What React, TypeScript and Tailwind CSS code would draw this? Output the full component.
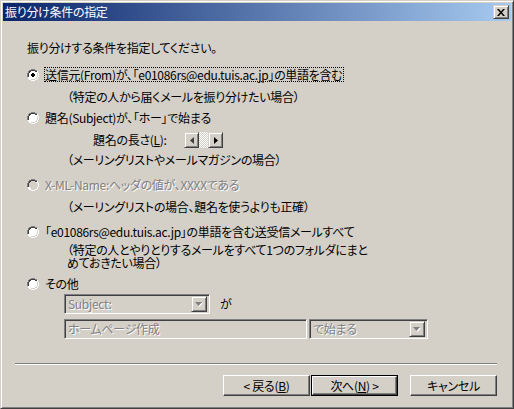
import React from "react";

const sunken =
  "border border-t-[#808080] border-l-[#808080] border-r-white border-b-white shadow-[inset_1px_1px_0_#404040,inset_-1px_-1px_0_#d4d0c8]";
const raised =
  "border border-t-[#d4d0c8] border-l-[#d4d0c8] border-r-[#404040] border-b-[#404040] shadow-[inset_1px_1px_0_#fff,inset_-1px_-1px_0_#808080] bg-[#d4d0c8]";
const btnRaised =
  "border border-t-white border-l-white border-r-[#404040] border-b-[#404040] shadow-[inset_-1px_-1px_0_#808080] bg-[#d4d0c8]";
const disabledText = "text-[#808080] [text-shadow:1px_1px_0_#fff]";

function Radio({ checked = false, disabled = false }: { checked?: boolean; disabled?: boolean }) {
  return (
    <svg width="12" height="12" viewBox="0 0 12 12" className="shrink-0">
      <path d="M4 0h4v1h2v1h1v2h1v4h-1v2h-1v1h-2v1h-4v-1h-2v-1h-1v-2h-1v-4h1v-2h1v-1h2z" fill="#fff" />
      <path d="M4 0h4v1h2v1h-2v-1h-4v1h-2v2h-1v4h-1v-4h1v-2h1v-1h2z" fill="#808080" />
      <path d="M4 1h4v1h2v1h-2v-1h-4v1h-1v1h-1v4h-1v-4h1v-2h1z" fill="#404040" />
      <path d="M10 3h0v1h1v4h-1v2h-2v1h-4v-1h4v-1h1v-1h1v-4z" fill="#d4d0c8" />
      <path d="M4 2h4v1h1v1h1v4h-1v1h-1v1h-4v-1h-1v-1h-1v-4h1v-1h1z" fill={disabled ? "#d4d0c8" : "#fff"} />
      {checked && <path d="M5 4h2v1h1v2h-1v1h-2v-1h-1v-2h1z" fill="#000" />}
    </svg>
  );
}

function DownArrow({ disabled = false }: { disabled?: boolean }) {
  return (
    <svg width="8" height="5" viewBox="0 0 8 5">
      {disabled && <path d="M1 1h7l-3.5 4z" fill="#fff" />}
      <path d="M0 0h7l-3.5 4z" fill={disabled ? "#808080" : "#000"} />
    </svg>
  );
}

function Combo({ text, width }: { text: string; width: string }) {
  return (
    <div className={`${sunken} ${width} h-[20px] bg-[#d4d0c8] flex items-center p-[2px]`}>
      <div className={`flex-1 pl-[1px] leading-[14px] whitespace-nowrap ${disabledText}`}>{text}</div>
      <div className={`${raised} w-[16px] h-[16px] flex items-center justify-center`}>
        <DownArrow disabled />
      </div>
    </div>
  );
}

function RadioRow({
  children,
  checked = false,
  disabled = false,
  focused = false,
  mt,
}: {
  children: React.ReactNode;
  checked?: boolean;
  disabled?: boolean;
  focused?: boolean;
  mt: string;
}) {
  return (
    <div className={`${mt} ml-[24px] h-[15px] flex items-center`}>
      <Radio checked={checked} disabled={disabled} />
      <div
        className={`ml-[5px] h-[15px] leading-[13px] pr-[1px] whitespace-nowrap border ${
          focused ? "border-dotted border-black" : "border-transparent"
        } ${disabled ? disabledText : ""}`}
      >
        {children}
      </div>
    </div>
  );
}

export default function App() {
  return (
    <div className="w-[514px] h-[409px] bg-[#d4d0c8] border border-t-[#d4d0c8] border-l-[#d4d0c8] border-r-[#404040] border-b-[#404040] shadow-[inset_1px_1px_0_#fff,inset_-1px_-1px_0_#808080] p-[2px] flex flex-col font-['Noto_Sans_CJK_JP','Liberation_Sans',sans-serif] [font-feature-settings:'palt'] tracking-[-0.3px] text-[12px] text-black overflow-hidden">
      {/* Title bar */}
      <div className="h-[18px] shrink-0 bg-[linear-gradient(to_right,#0a246a,#a6caf0)] flex items-center justify-between pl-[2px] pr-[2px]">
        <div className="text-white leading-[14px] whitespace-nowrap">振り分け条件の指定</div>
        <div className={`${raised} w-[16px] h-[14px] flex items-center justify-center`}>
          <svg width="8" height="7" viewBox="0 0 8 7">
            <path d="M0 0h2l2 2.5L6 0h2L5 3.5 8 7H6L4 4.5 2 7H0l3-3.5z" fill="#000" />
          </svg>
        </div>
      </div>

      <div className="mt-[1px] flex flex-col">
        <div className="mt-[19px] ml-[24px] h-[14px] leading-[14px] whitespace-nowrap">
          振り分けする条件を指定してください。
        </div>

        <RadioRow mt="mt-[12px]" checked focused>
          送信元(From)が、「e01086rs@edu.tuis.ac.jp」の単語を含む
        </RadioRow>
        <div className="mt-[8px] ml-[64px] h-[14px] leading-[14px] whitespace-nowrap">
          （特定の人から届くメールを振り分けたい場合）
        </div>

        <RadioRow mt="mt-[6px]">題名(Subject)が、「ホー」で始まる</RadioRow>

        <div className="mt-[7px] ml-[90px] h-[16px] flex items-center">
          <div className="w-[91px] leading-[14px] whitespace-nowrap">
            題名の長さ(<span className="underline underline-offset-1">L</span>):
          </div>
          <div className="flex h-[16px]">
            <div className={`${raised} w-[15px] h-[16px] flex items-center justify-center`}>
              <svg width="4" height="7" viewBox="0 0 4 7">
                <path d="M4 0v7L0 3.5z" fill="#404040" />
              </svg>
            </div>
            <div className="w-[9px] h-[16px] bg-[repeating-conic-gradient(#fff_0%_25%,#d4d0c8_0%_50%)] bg-[length:2px_2px]" />
            <div className={`${raised} w-[15px] h-[16px] flex items-center justify-center`}>
              <svg width="4" height="7" viewBox="0 0 4 7">
                <path d="M0 0v7L4 3.5z" fill="#000" />
              </svg>
            </div>
          </div>
        </div>

        <div className="mt-[5px] ml-[64px] h-[14px] leading-[14px] whitespace-nowrap">
          （メーリングリストやメールマガジンの場合）
        </div>

        <RadioRow mt="mt-[10px]" disabled>
          X-ML-Name:ヘッダの値が、XXXXである
        </RadioRow>
        <div className="mt-[8px] ml-[64px] h-[14px] leading-[14px] whitespace-nowrap">
          （メーリングリストの場合、題名を使うよりも正確）
        </div>

        <RadioRow mt="mt-[10px]">
          「e01086rs@edu.tuis.ac.jp」の単語を含む送受信メールすべて
        </RadioRow>
        <div className="mt-[4px] ml-[64px] leading-[13px] whitespace-nowrap">
          <div className="h-[13px]">（特定の人とやりとりするメールをすべて1つのフォルダにまと</div>
          <div className="h-[13px]">めておきたい場合）</div>
        </div>

        <RadioRow mt="mt-[7px]">その他</RadioRow>

        <div className="mt-[3px] ml-[61px] h-[20px] flex items-center">
          <Combo text="Subject:" width="w-[146px]" />
          <div className="ml-[10px] leading-[14px]">が</div>
        </div>

        <div className="mt-[5px] ml-[61px] h-[20px] flex items-center gap-[2px]">
          <div className={`${sunken} w-[243px] h-[20px] bg-[#d4d0c8] flex items-center pl-[3px]`}>
            <span className={`leading-[14px] whitespace-nowrap ${disabledText}`}>ホームページ作成</span>
          </div>
          <Combo text="で始まる" width="w-[119px]" />
        </div>

        <div className="mt-[24px] ml-[12px] w-[482px] h-[2px] border-t border-t-[#808080] border-b border-b-white" />

        <div className="mt-[10px] ml-[220px] flex items-center">
          <div className={`${btnRaised} w-[87px] h-[21px] flex items-center justify-center leading-[14px] whitespace-nowrap`}>
            &lt; 戻る(<span className="underline underline-offset-1">B</span>)
          </div>
          <div className="ml-[1px] w-[87px] h-[21px] border border-black">
            <div className={`${btnRaised} w-full h-full flex items-center justify-center leading-[14px] whitespace-nowrap`}>
              次へ(<span className="underline underline-offset-1">N</span>) &gt;
            </div>
          </div>
          <div className={`ml-[12px] ${btnRaised} w-[87px] h-[21px] flex items-center justify-center leading-[14px] whitespace-nowrap`}>
            キャンセル
          </div>
        </div>
      </div>
    </div>
  );
}
